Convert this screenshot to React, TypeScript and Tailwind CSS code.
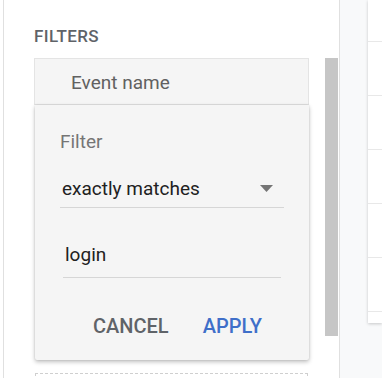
const rows = [0, 1, 2, 3, 4, 5];

export default function App() {
  return (
    <div className="flex h-[378px] w-[382px] overflow-hidden bg-[#f8f9fa] font-['Roboto',sans-serif]">
      <div className="w-[3px] shrink-0 bg-white" />

      {/* filters drawer */}
      <aside className="flex w-[337px] shrink-0 border-x border-[#e0e0e0] bg-white">
        <div className="w-[306px] shrink-0 pl-[30px]">
          <h3 className="mt-[26px] text-[17px] leading-[20px] font-medium tracking-[0.4px] text-[#5f6368]">
            FILTERS
          </h3>

          <div className="mt-[12px] h-[47px] w-[275px] border border-[#e4e4e4] bg-[#f5f5f5] pl-[36px] pt-[13px] text-[19px] leading-[22px] text-[#616161]">
            Event name
          </div>

          <div className="ml-[1px] h-[255px] w-[274px] rounded-b-[2px] bg-[#f5f5f5] px-[25px] shadow-[0_2px_4px_rgba(0,0,0,0.25),0_0_2px_rgba(0,0,0,0.12)]">
            <div className="pt-[26px] text-[19px] leading-[22px] text-[#757575]">Filter</div>

            <div className="mt-[17px] flex h-[38px] items-center justify-between border-b border-[#d6d6d6] pl-[2px] pr-[11px] text-[19px] leading-[22px] text-[#212121]">
              <span>exactly matches</span>
              <svg width="13" height="7" viewBox="0 0 13 7">
                <path d="M0 0h13L6.5 7z" fill="#757575" />
              </svg>
            </div>

            <div className="mx-[3px] mt-[25px] flex h-[45px] items-center border-b border-[#d6d6d6] pl-[2px] text-[19px] leading-[22px] text-[#212121]">
              login
            </div>

            <div className="mt-[37px] flex justify-end gap-[34px] pr-[22px] text-[20px] leading-[22px] font-medium">
              <button className="text-[#5f6368]">CANCEL</button>
              <button className="text-[#3f6fc9]">APPLY</button>
            </div>
          </div>

          <div className="ml-[1px] mt-[13px] h-[20px] w-[273px] border border-dashed border-[#cfcfcf]" />
        </div>

        <div className="ml-[15px] mt-[58px] h-[278px] w-[13px] bg-[#c6c6c6]" />
      </aside>

      <div className="w-[28px] shrink-0" />

      {/* table behind the drawer */}
      <div className="h-[323px] flex-1 bg-white shadow-[0_1px_3px_rgba(0,0,0,0.2)]">
        <div className="h-[41px]" />
        {rows.map((r) => (
          <div key={r} className="h-[54px] border-t border-[#e8e8e8]" />
        ))}
      </div>
    </div>
  );
}
